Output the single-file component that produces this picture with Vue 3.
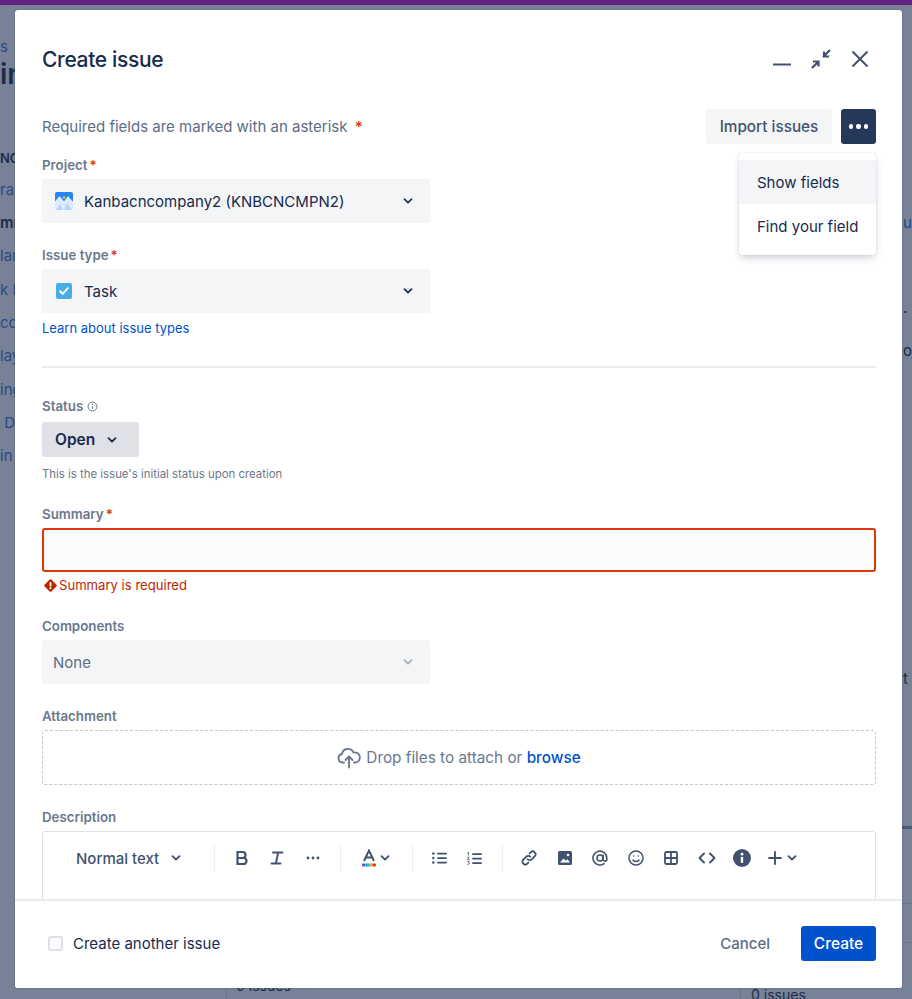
<script setup>
const backdropLeft = [
  { text: 's', top: 38, size: 15, cls: '' },
  { text: 'in', top: 65, size: 28, cls: 'bold' },
  { text: 'NC', top: 149, size: 13, cls: 'bold' },
  { text: 'ra', top: 181, size: 15, cls: 'blue' },
  { text: 'mm', top: 214, size: 15, cls: 'bold' },
  { text: 'lar', top: 247, size: 15, cls: 'blue' },
  { text: 'k F', top: 281, size: 15, cls: 'blue' },
  { text: 'cc', top: 314, size: 15, cls: 'blue' },
  { text: 'lay', top: 347, size: 15, cls: 'blue' },
  { text: 'ing', top: 381, size: 15, cls: 'blue' },
  { text: ' D', top: 414, size: 15, cls: 'blue' },
  { text: 'in', top: 447, size: 15, cls: 'blue' }
]
</script>

<template>
  <div class="page">
    <div class="topbar"></div>

    <div class="backdrop-left">
      <span
        v-for="item in backdropLeft"
        :key="item.top"
        class="bd-text"
        :class="item.cls"
        :style="{ top: item.top + 'px', fontSize: item.size + 'px' }"
      >{{ item.text }}</span>
    </div>
    <span class="bd-right r1">un</span>
    <span class="bd-right r2">.</span>
    <span class="bd-right r3">oj</span>
    <span class="bd-right r4">t</span>
    <div class="bd-line l1"></div>
    <div class="bd-line l2"></div>
    <div class="bd-line l3"></div>
    <div class="bd-col c1"></div>
    <div class="bd-col c2"></div>
    <span class="bd-issue i1">0 issues</span>
    <span class="bd-issue i2">0 issues</span>

    <div class="modal">
      <header class="modal-header">
        <h1 class="title">Create issue</h1>
        <div class="window-actions">
          <svg class="wa" width="24" height="24" viewBox="0 0 24 24"><path d="M3 17.500h18" stroke="#42526e" stroke-width="2" fill="none" /></svg>
          <svg class="wa" width="24" height="24" viewBox="0 0 24 24" fill="none" stroke="#42526e" stroke-width="2.200"><path d="M21 3l-7 7M15 4.500V9.500h5M3 21l7-7M4 14.500H9.500v5" /></svg>
          <svg class="wa" width="24" height="24" viewBox="0 0 24 24" fill="none" stroke="#42526e" stroke-width="2"><path d="M4.500 4.500l15 15M19.500 4.500l-15 15" /></svg>
        </div>
      </header>

      <div class="modal-body">
        <div class="required-row">
          <p class="required-note">Required fields are marked with an asterisk <span class="star note-star">*</span></p>
          <div class="required-actions">
            <button class="btn-import">Import issues</button>
            <button class="btn-more" aria-label="More">
              <i></i><i></i><i></i>
            </button>
          </div>
          <div class="menu">
            <div class="menu-item active">Show fields</div>
            <div class="menu-item">Find your field</div>
          </div>
        </div>

        <div class="label first">Project<span class="star">*</span></div>
        <div class="select">
          <svg class="opt-icon" width="18" height="18" viewBox="0 0 18 18">
            <rect width="18" height="18" rx="2" fill="#2684ff" />
            <rect y="9" width="18" height="9" fill="#b3d4ff" />
            <path d="M0 18V9.500L4.500 4 9 9.500 13 4l5 6v8z" fill="#deebff" />
            <path d="M1 18l4-6 3 6zM9 18l3-7 5 7z" fill="#b3d4ff" />
            <circle cx="9" cy="5.500" r="1.300" fill="#ffc400" />
          </svg>
          <span class="opt-text">Kanbacncompany2 (KNBCNCMPN2)</span>
          <svg class="chev" width="12" height="8" viewBox="0 0 12 8"><path d="M2.500 2.200 6 5.700l3.500-3.500" fill="none" stroke="#253858" stroke-width="1.900" stroke-linecap="round" stroke-linejoin="round" /></svg>
        </div>

        <div class="label">Issue type<span class="star">*</span></div>
        <div class="select">
          <svg class="opt-icon task" width="16" height="16" viewBox="0 0 16 16">
            <rect width="16" height="16" rx="2" fill="#4bade8" />
            <path d="M4.200 8.200l2.600 2.600 5-5.600" fill="none" stroke="#fff" stroke-width="2" stroke-linecap="round" stroke-linejoin="round" />
          </svg>
          <span class="opt-text">Task</span>
          <svg class="chev" width="12" height="8" viewBox="0 0 12 8"><path d="M2.500 2.200 6 5.700l3.500-3.500" fill="none" stroke="#253858" stroke-width="1.900" stroke-linecap="round" stroke-linejoin="round" /></svg>
        </div>
        <a class="learn">Learn about issue types</a>

        <div class="divider"></div>

        <div class="label status-label">
          Status
          <svg class="info-mini" width="11" height="11" viewBox="0 0 11 11" fill="none">
            <circle cx="5.500" cy="5.500" r="4.500" stroke="#6b778c" />
            <path d="M5.500 5v3" stroke="#6b778c" />
            <circle cx="5.500" cy="3.300" r=".7" fill="#6b778c" />
          </svg>
        </div>
        <button class="btn-status">
          Open
          <svg width="12" height="8" viewBox="0 0 12 8"><path d="M2.500 2.200 6 5.700l3.500-3.500" fill="none" stroke="#172b4d" stroke-width="1.900" stroke-linecap="round" stroke-linejoin="round" /></svg>
        </button>
        <div class="helper">This is the issue's initial status upon creation</div>

        <div class="label summary-label">Summary<span class="star">*</span></div>
        <div class="input-error"></div>
        <div class="error">
          <svg width="13" height="13" viewBox="0 0 14 14">
            <path d="M5.800.8a1.700 1.700 0 0 1 2.400 0l5 5a1.700 1.700 0 0 1 0 2.400l-5 5a1.700 1.700 0 0 1-2.400 0l-5-5a1.700 1.700 0 0 1 0-2.400z" fill="#bf2600" />
            <rect x="6" y="3.200" width="2" height="5" rx="1" fill="#fff" />
            <circle cx="7" cy="10" r="1.100" fill="#fff" />
          </svg>
          Summary is required
        </div>

        <div class="label">Components</div>
        <div class="select none">
          <span class="opt-none">None</span>
          <svg class="chev" width="12" height="8" viewBox="0 0 12 8"><path d="M2.500 2.200 6 5.700l3.500-3.500" fill="none" stroke="#a5adba" stroke-width="1.900" stroke-linecap="round" stroke-linejoin="round" /></svg>
        </div>

        <div class="label">Attachment</div>
        <div class="dropzone">
          <svg width="24" height="22" viewBox="0 0 24 22" fill="none" stroke="#6b778c" stroke-width="1.800" stroke-linecap="round" stroke-linejoin="round">
            <path d="M7 15.500H5.500a4.300 4.300 0 0 1-.5-8.500 6 6 0 0 1 11.400-1.500 5 5 0 0 1 2.600 10H17" />
            <path d="M12 20.500V10M8.500 13l3.500-3.500 3.500 3.500" />
          </svg>
          <span>Drop files to attach or <a class="browse">browse</a></span>
        </div>

        <div class="label">Description</div>
        <div class="editor">
          <div class="toolbar">
            <div class="tb-style">
              Normal text
              <svg width="12" height="8" viewBox="0 0 12 8"><path d="M2.500 2.200 6 5.700l3.500-3.500" fill="none" stroke="#42526e" stroke-width="1.900" stroke-linecap="round" stroke-linejoin="round" /></svg>
            </div>
            <div class="sep"></div>

            <div class="tb-group">
              <div class="tb"><svg width="14" height="16" viewBox="0 0 14 16" fill="none" stroke="#42526e" stroke-width="2.200"><path d="M2.500 2h5a3 3 0 0 1 0 6h-5zM2.500 8h6a3 3 0 0 1 0 6h-6z" /></svg></div>
              <div class="tb"><svg width="14" height="14" viewBox="0 0 14 14" fill="none" stroke="#42526e" stroke-width="1.900" stroke-linecap="round"><path d="M3 1.500h9.500M1.500 12.500h9M8.200 1.500 5.800 12.500" /></svg></div>
              <div class="tb"><svg width="14" height="4" viewBox="0 0 14 4" fill="#42526e"><circle cx="2" cy="2" r="1.400" /><circle cx="7" cy="2" r="1.400" /><circle cx="12" cy="2" r="1.400" /></svg></div>
            </div>
            <div class="sep"></div>

            <div class="tb-color">
              <svg width="14" height="18" viewBox="0 0 14 18">
                <path d="M2 12 7 1.500 12 12M3.800 8.500h6.400" fill="none" stroke="#42526e" stroke-width="1.900" />
                <rect x="0" y="14.500" width="3.500" height="3" rx="1" fill="#6554c0" />
                <rect x="3.500" y="14.500" width="3.500" height="3" fill="#00b8d9" />
                <rect x="7" y="14.500" width="3.500" height="3" fill="#ff991f" />
                <rect x="10.500" y="14.500" width="3.500" height="3" rx="1" fill="#de350b" />
              </svg>
              <svg width="12" height="8" viewBox="0 0 12 8"><path d="M2.500 2.200 6 5.700l3.500-3.500" fill="none" stroke="#42526e" stroke-width="1.900" stroke-linecap="round" stroke-linejoin="round" /></svg>
            </div>
            <div class="sep"></div>

            <div class="tb-group">
              <div class="tb"><svg width="15" height="12" viewBox="0 0 15 12" fill="#42526e"><circle cx="1.300" cy="1.500" r="1.200" /><circle cx="1.300" cy="6" r="1.200" /><circle cx="1.300" cy="10.500" r="1.200" /><rect x="5" y=".7" width="10" height="1.700" rx=".8" /><rect x="5" y="5.200" width="10" height="1.700" rx=".8" /><rect x="5" y="9.700" width="10" height="1.700" rx=".8" /></svg></div>
              <div class="tb"><svg width="15" height="13" viewBox="0 0 15 13" fill="#42526e"><path d="M.3 1 1.500.4v3M.3 5.400h1.800L.4 7.700h2M.4 9.600h2l-1 1.200h.4a.8.8 0 0 1 0 1.500H.4" fill="none" stroke="#42526e" stroke-width=".8" /><rect x="5" y="1.200" width="10" height="1.700" rx=".8" /><rect x="5" y="5.700" width="10" height="1.700" rx=".8" /><rect x="5" y="10.200" width="10" height="1.700" rx=".8" /></svg></div>
            </div>
            <div class="sep"></div>

            <div class="tb-group">
              <div class="tb"><svg width="16" height="16" viewBox="0 0 16 16" fill="none" stroke="#42526e" stroke-width="1.800" stroke-linecap="round"><path d="M6.700 9.300a2.800 2.800 0 0 0 4 0l3-3a2.800 2.800 0 0 0-4-4L8.600 3.400" /><path d="M9.300 6.700a2.800 2.800 0 0 0-4 0l-3 3a2.800 2.800 0 0 0 4 4l1.100-1.100" /></svg></div>
              <div class="tb"><svg width="14" height="14" viewBox="0 0 14 14"><rect width="14" height="14" rx="1.500" fill="#42526e" /><path d="M2 11.500 5.500 7.500l2.300 2.200 1.700-1.500 2.500 3.300z" fill="#fff" /><circle cx="10" cy="4" r="1.300" fill="#fff" /></svg></div>
              <div class="tb"><svg width="16" height="16" viewBox="0 0 16 16" fill="none" stroke="#42526e" stroke-width="1.600" stroke-linecap="round"><circle cx="8" cy="8" r="3" /><path d="M11 5v4.200a1.900 1.900 0 0 0 3.800 0V8a6.900 6.900 0 1 0-2.800 5.600" /></svg></div>
              <div class="tb"><svg width="16" height="16" viewBox="0 0 16 16" fill="none" stroke="#42526e" stroke-width="1.500" stroke-linecap="round"><circle cx="8" cy="8" r="7" /><path d="M5 10a3.600 3.600 0 0 0 6 0" /><circle cx="5.700" cy="6" r=".8" fill="#42526e" stroke="none" /><circle cx="10.300" cy="6" r=".8" fill="#42526e" stroke="none" /></svg></div>
              <div class="tb"><svg width="14" height="14" viewBox="0 0 14 14" fill="none" stroke="#42526e" stroke-width="1.800"><rect x="1" y="1" width="12" height="12" rx="1.500" /><path d="M7 1v12M1 7h12" /></svg></div>
              <div class="tb"><svg width="18" height="12" viewBox="0 0 18 12" fill="none" stroke="#42526e" stroke-width="1.900" stroke-linecap="round" stroke-linejoin="round"><path d="M6 1.500 1.500 6 6 10.500M12 1.500 16.500 6 12 10.500" /></svg></div>
              <div class="tb"><svg width="18" height="18" viewBox="0 0 18 18"><circle cx="9" cy="9" r="9" fill="#42526e" /><rect x="7.800" y="7.800" width="2.400" height="6.200" rx="1" fill="#fff" /><circle cx="9" cy="5.200" r="1.400" fill="#fff" /></svg></div>
              <div class="tb-plus">
                <svg width="14" height="14" viewBox="0 0 14 14" stroke="#42526e" stroke-width="1.900" stroke-linecap="round"><path d="M7 1v12M1 7h12" /></svg>
                <svg width="12" height="8" viewBox="0 0 12 8"><path d="M2.500 2.200 6 5.700l3.500-3.500" fill="none" stroke="#42526e" stroke-width="1.900" stroke-linecap="round" stroke-linejoin="round" /></svg>
              </div>
            </div>
          </div>
        </div>
      </div>

      <footer class="modal-footer">
        <label class="another">
          <span class="checkbox"></span>
          Create another issue
        </label>
        <div class="footer-actions">
          <button class="btn-cancel">Cancel</button>
          <button class="btn-create">Create</button>
        </div>
      </footer>
    </div>
  </div>
</template>

<style scoped>
.page {
  position: relative;
  width: 912px;
  height: 999px;
  overflow: hidden;
  background: #788296;
  font-family: Inter, "Liberation Sans", sans-serif;
  color: #172b4d;
}
.topbar { height: 5px; background: #642082; }
.backdrop-left { position: absolute; left: 0; top: 0; width: 15px; height: 999px; overflow: hidden; }
.bd-text { position: absolute; left: 0; white-space: pre; line-height: 18px; color: #2a4a85; font-weight: 400; }
.bd-text.bold { color: #1c2c4c; font-weight: 600; }
.bd-text.blue { color: #2a4a85; }
.bd-right { position: absolute; left: 903px; font-size: 15px; line-height: 18px; color: #1f4684; }
.r1 { top: 214px; }
.r2 { top: 299px; color: #17294a; }
.r3 { top: 342px; color: #17294a; }
.r4 { top: 670px; color: #17294a; }
.bd-line { position: absolute; background: #6a7488; }
.l1 { left: 902px; top: 826px; width: 10px; height: 3px; background: #4a5a78; }
.l2 { left: 902px; top: 903px; width: 10px; height: 1px; }
.l3 { left: 902px; top: 942px; width: 10px; height: 1px; }
.bd-col { position: absolute; top: 988px; height: 11px; width: 1px; background: #68728a; }
.c1 { left: 226px; }
.c2 { left: 740px; }
.bd-issue { position: absolute; top: 986px; font-size: 14px; line-height: 18px; color: #1c2c4c; }
.i1 { left: 236px; top: 977px; }
.i2 { left: 751px; }

.modal {
  position: absolute;
  left: 15px;
  top: 10px;
  width: 887px;
  height: 978px;
  display: flex;
  flex-direction: column;
  background: #fff;
  border-radius: 3px;
  box-shadow: 0 0 2px rgba(9, 30, 66, .3);
  overflow: hidden;
}
.modal-header {
  flex: none;
  height: 99px;
  padding: 0 27px;
  display: flex;
  justify-content: space-between;
  align-items: flex-start;
}
.title {
  margin: 36px 0 0;
  font-size: 21px;
  line-height: 28px;
  font-weight: 500;
  letter-spacing: -.35px;
  color: #172b4d;
}
.window-actions { display: flex; gap: 15px; margin: 37px 3px 0 0; }
.wa { display: block; }

.modal-body { flex: 1; min-height: 0; padding: 0 26px 0 27px; overflow: hidden; }
.required-row { position: relative; display: flex; justify-content: space-between; align-items: center; height: 35px; }
.required-note { margin: 0; font-size: 15px; line-height: 20px; color: #5e6c84; }
.star { color: #de350b; margin-left: 2px; font-weight: 600; }
.note-star { margin-left: 3px; }
.required-actions { display: flex; gap: 9px; }
button { font-family: inherit; border: 0; cursor: pointer; }
.btn-import {
  width: 126px;
  height: 35px;
  border-radius: 3px;
  background: #f4f5f7;
  color: #42526e;
  font-size: 15.300px;
  font-weight: 500;
}
.btn-more {
  width: 35px;
  height: 35px;
  border-radius: 3px;
  background: #253858;
  display: flex;
  align-items: center;
  justify-content: center;
  gap: 3px;
  padding: 0;
}
.btn-more i { width: 4.500px; height: 4.500px; border-radius: 50%; background: #fff; display: block; }
.menu {
  position: absolute;
  right: 0;
  top: 44px;
  width: 137px;
  height: 102px;
  padding: 7px 0;
  box-sizing: border-box;
  background: #fff;
  border-radius: 3px;
  box-shadow: 0 4px 8px -2px rgba(9, 30, 66, .25), 0 0 1px rgba(9, 30, 66, .31);
  z-index: 2;
}
.menu-item { height: 44px; box-sizing: border-box; padding: 1px 0 0 18px; line-height: 44px; font-size: 15px; color: #172b4d; }
.menu-item.active { background: #f4f5f7; }

.label {
  height: 20px;
  margin-top: 22px;
  margin-bottom: 4px;
  line-height: 20px;
  font-size: 13.300px;
  font-weight: 600;
  color: #6b778c;
}
.label.first { margin-top: 11px; }
.select {
  width: 388px;
  height: 44px;
  box-sizing: border-box;
  border-radius: 3px;
  background: #f4f5f7;
  display: flex;
  align-items: center;
  padding: 0 16px 0 13px;
}
.opt-icon { flex: none; margin-right: 11px; }
.opt-icon.task { margin: 0 12px 0 1px; }
.opt-text { flex: 1; font-size: 15px; color: #172b4d; }
.chev { flex: none; }
.select.none { padding-left: 11px; }
.opt-none { flex: 1; font-size: 15px; color: #5e6c84; }
.learn { display: block; margin-top: 5px; line-height: 20px; font-size: 13px; color: #0052cc; }
.divider { height: 2px; margin-top: 28px; background: #ebecf0; }
.label.status-label { margin-top: 28px; margin-bottom: 6px; display: flex; align-items: center; gap: 4px; }
.info-mini { display: block; }
.btn-status {
  display: flex;
  align-items: center;
  gap: 11px;
  width: 97px;
  height: 35px;
  padding: 0 0 0 13px;
  border-radius: 3px;
  background: #dfe1e6;
  color: #172b4d;
  font-size: 15.500px;
  font-weight: 600;
}
.helper { margin-top: 7px; line-height: 20px; font-size: 11.400px; color: #6b778c; }
.label.summary-label { margin-top: 20px; }
.input-error {
  height: 44px;
  box-sizing: border-box;
  border: 2px solid #de350b;
  border-radius: 3px;
  background: #fafbfc;
}
.error {
  display: flex;
  align-items: center;
  gap: 2px;
  height: 20px;
  margin-top: 3px;
  margin-bottom: -1px;
  padding-left: 2px;
  font-size: 13.100px;
  color: #bf2600;
}
.dropzone {
  height: 55px;
  box-sizing: border-box;
  border: 1px dashed #c1c7d0;
  border-radius: 3px;
  display: flex;
  align-items: center;
  justify-content: center;
  gap: 5px;
  font-size: 15.300px;
  color: #6b778c;
}
.browse { color: #0052cc; font-weight: 500; }
.editor {
  height: 120px;
  box-sizing: border-box;
  border: 1px solid #dfe1e6;
  border-radius: 3px;
}
.toolbar { display: flex; align-items: center; height: 52px; }
.tb-style {
  display: flex;
  align-items: center;
  gap: 11px;
  width: 171px;
  box-sizing: border-box;
  padding-left: 33px;
  font-size: 15px;
  font-weight: 500;
  color: #42526e;
}
.sep { flex: none; width: 1px; height: 26px; background: #ebecf0; }
.tb-group { display: flex; align-items: center; margin: 0 9px; }
.tb { width: 35.500px; height: 30px; display: flex; align-items: center; justify-content: center; }
.tb-color { width: 71px; display: flex; align-items: center; justify-content: center; gap: 3px; }
.tb-plus { width: 46px; display: flex; align-items: center; justify-content: center; gap: 4px; }

.modal-footer {
  flex: none;
  height: 89px;
  box-sizing: border-box;
  border-top: 2px solid #ebecf0;
  padding: 0 26px 2px 33px;
  display: flex;
  align-items: center;
  justify-content: space-between;
  background: #fff;
}
.another { display: flex; align-items: center; gap: 10px; font-size: 15px; color: #172b4d; }
.checkbox {
  width: 15px;
  height: 15px;
  box-sizing: border-box;
  border: 2px solid #dfe1e6;
  border-radius: 3px;
  background: #fafbfc;
}
.footer-actions { display: flex; align-items: center; gap: 31px; }
.btn-cancel { background: none; padding: 0; color: #5e6c84; font-size: 15px; font-weight: 500; }
.btn-create {
  width: 75px;
  height: 35px;
  border-radius: 3px;
  background: #0052cc;
  color: #fff;
  font-size: 15.500px;
  font-weight: 500;
}
</style>
